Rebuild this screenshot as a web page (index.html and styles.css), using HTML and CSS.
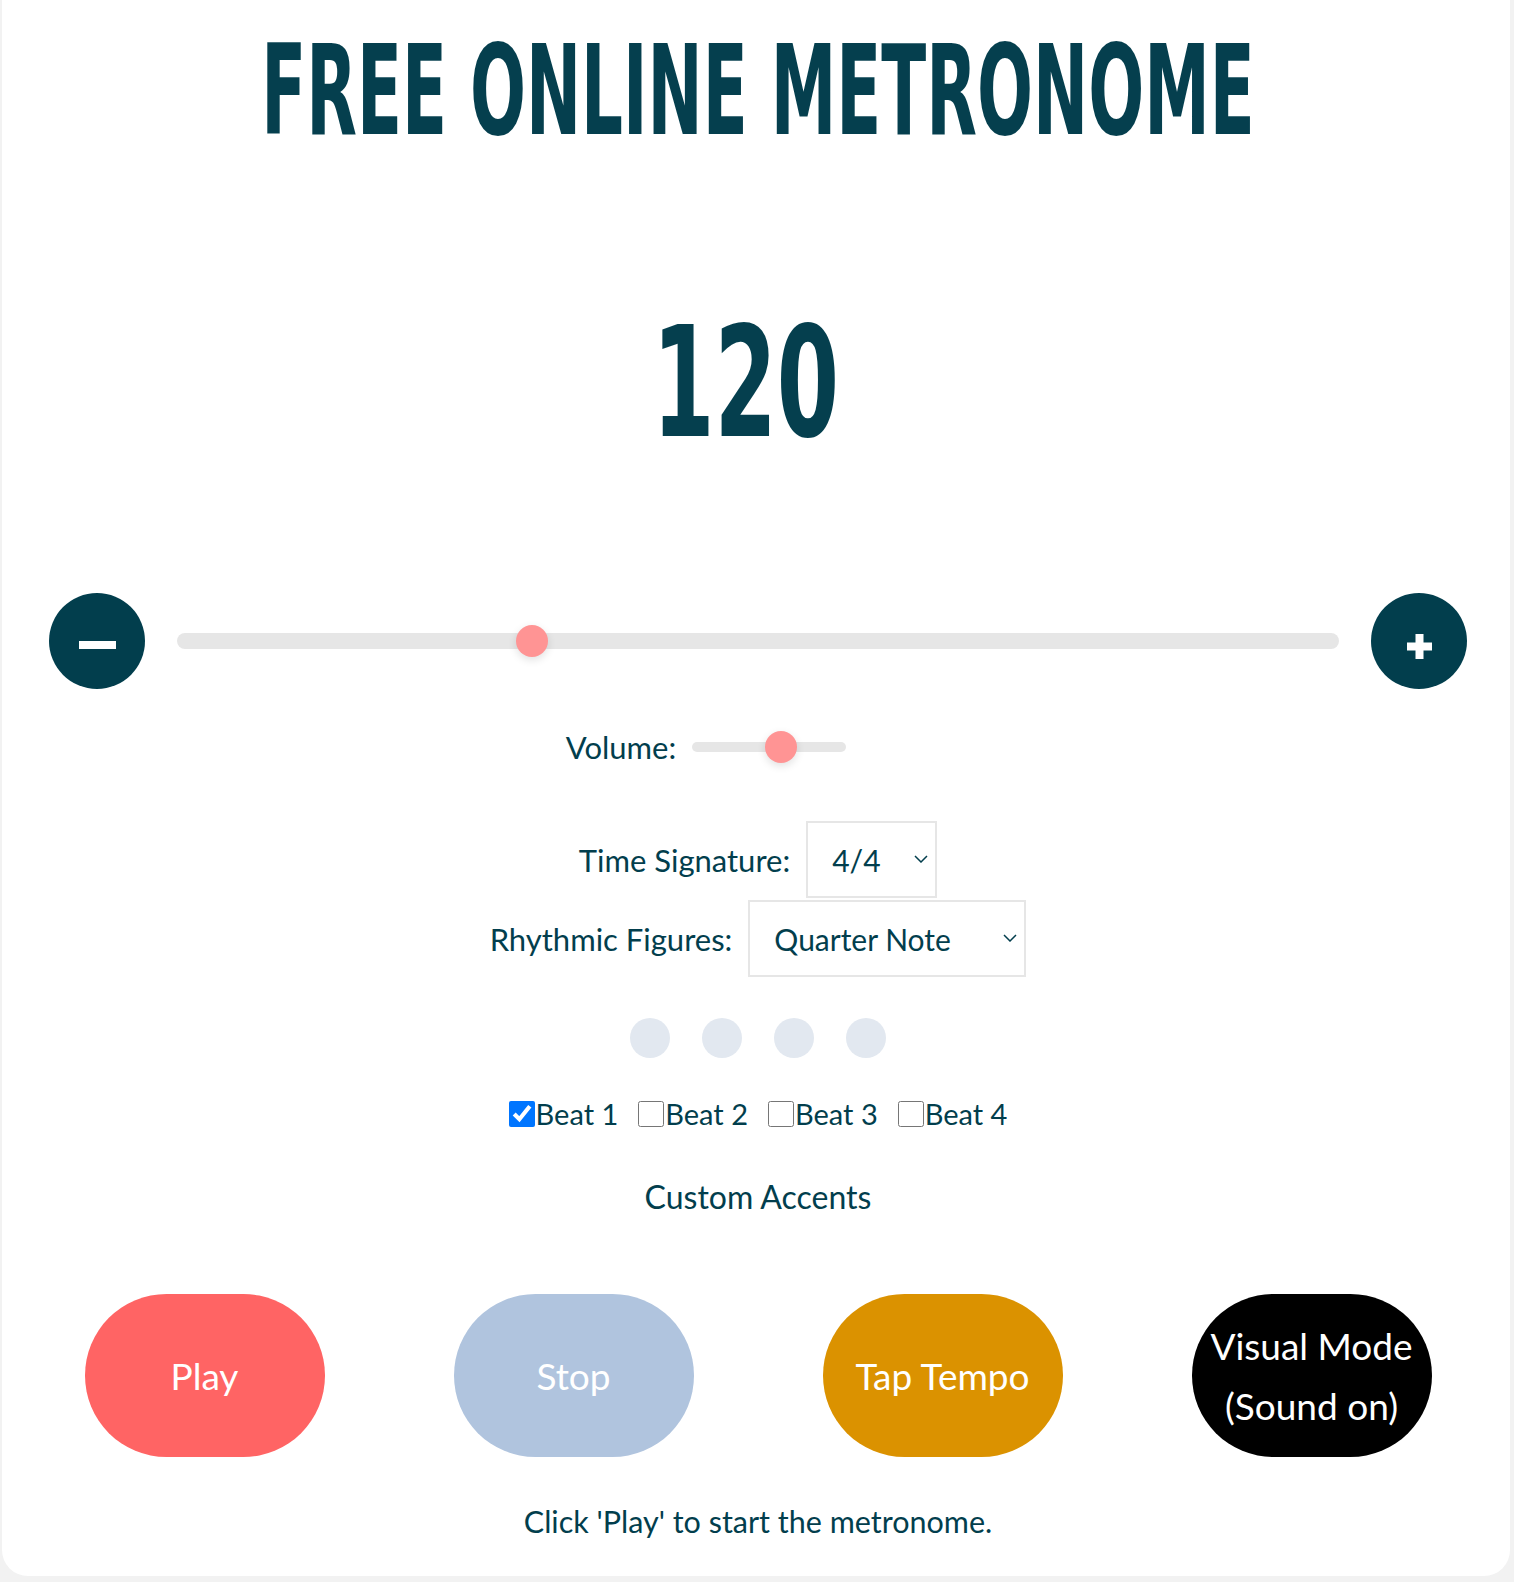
FILE: index.html
```html
<!DOCTYPE html>
<html lang="en">
<head>
<meta charset="utf-8">
<title>Free Online Metronome</title>
<link rel="stylesheet" href="styles.css">
</head>
<body>
<main class="card">
  <h1 class="title"><span class="title-text">FREE ONLINE METRONOME</span></h1>

  <div class="bpm"><span class="bpm-text">120</span></div>

  <div class="tempo-row">
    <button class="round-btn" aria-label="Decrease tempo">
      <svg class="icon-minus" width="37" height="8" viewBox="0 0 37 8"><rect x="0" y="0" width="37" height="8" fill="#fff"/></svg>
    </button>
    <input class="range tempo-range" type="range" min="30" max="330" value="120">
    <button class="round-btn" aria-label="Increase tempo">
      <svg class="icon-plus" width="25" height="25" viewBox="0 0 25 25"><rect x="8.5" y="0" width="8" height="25" fill="#fff"/><rect x="0" y="8.5" width="25" height="8" fill="#fff"/></svg>
    </button>
  </div>

  <div class="volume-row">
    <label class="label" for="vol">Volume:</label>
    <input id="vol" class="range volume-range" type="range" min="0" max="100" value="60">
  </div>

  <div class="select-row time-row">
    <label class="label" for="ts">Time Signature:</label>
    <div class="select-wrap select-time">
      <select id="ts" class="select"><option>4/4</option><option>3/4</option><option>2/4</option></select>
      <svg class="chevron" width="14" height="8" viewBox="0 0 14 8"><polyline points="1,1 7,7 13,1" fill="none" stroke="#023e4d" stroke-width="1.5"/></svg>
    </div>
  </div>

  <div class="select-row rhythm-row">
    <label class="label" for="rf">Rhythmic Figures:</label>
    <div class="select-wrap select-rhythm">
      <select id="rf" class="select"><option>Quarter Note</option><option>Eighth Note</option></select>
      <svg class="chevron" width="14" height="8" viewBox="0 0 14 8"><polyline points="1,1 7,7 13,1" fill="none" stroke="#023e4d" stroke-width="1.5"/></svg>
    </div>
  </div>

  <div class="dots">
    <span class="dot"></span><span class="dot"></span><span class="dot"></span><span class="dot"></span>
  </div>

  <div class="beats">
    <label class="beat"><input type="checkbox" checked>Beat 1</label>
    <label class="beat"><input type="checkbox">Beat 2</label>
    <label class="beat"><input type="checkbox">Beat 3</label>
    <label class="beat"><input type="checkbox">Beat 4</label>
  </div>

  <p class="custom">Custom Accents</p>

  <div class="buttons">
    <button class="pill pill-play">Play</button>
    <button class="pill pill-stop">Stop</button>
    <button class="pill pill-tap">Tap Tempo</button>
    <button class="pill pill-visual">Visual Mode<br>(Sound on)</button>
  </div>

  <p class="status">Click 'Play' to start the metronome.</p>
</main>
</body>
</html>
```

FILE: styles.css
```css
* { box-sizing: border-box; }

html, body {
  margin: 0;
  padding: 0;
}

body {
  background: #f2f2f2;
  font-family: "Lato", "Open Sans", sans-serif;
  color: #023e4d;
}

.card {
  margin: 0 4px 5px 2px;
  background: #ffffff;
  border-radius: 0 0 26px 26px;
  padding: 46px 0 35px 4px;
  display: flex;
  flex-direction: column;
  align-items: center;
}

.title {
  margin: 0;
  height: 125px;
  font-family: "DejaVu Sans Condensed", "DejaVu Sans", sans-serif;
  font-stretch: condensed;
  font-weight: 700;
  font-size: 73.25px;
  line-height: 125px;
  color: #053f4e;
  white-space: nowrap;
}

.title-text {
  display: block;
  height: 125px;
  transform-origin: 50% 87.8px;
  transform: scaleY(1.706);
}

.bpm {
  margin-top: 134px;
  height: 156px;
  padding-right: 24px;
  font-family: "DejaVu Sans Condensed", "DejaVu Sans", sans-serif;
  font-stretch: condensed;
  font-weight: 700;
  font-size: 153px;
  line-height: 156px;
  color: #053f4e;
}

.bpm-text {
  display: inline-block;
  transform: scaleX(0.65);
}

.tempo-row {
  margin-top: 132px;
  width: 1418px;
  display: flex;
  align-items: center;
  gap: 32px;
}

.round-btn {
  width: 96px;
  height: 96px;
  flex: none;
  border: none;
  border-radius: 50%;
  background: #023e4d;
  padding: 0;
  display: flex;
  align-items: center;
  justify-content: center;
}

.icon-minus { margin-top: 7px; }
.icon-plus { margin-top: 10px; }

.range {
  -webkit-appearance: none;
  appearance: none;
  background: transparent;
  margin: 0;
  height: 32px;
  padding: 0;
}

.range::-webkit-slider-thumb {
  -webkit-appearance: none;
  appearance: none;
  width: 32px;
  height: 32px;
  border-radius: 50%;
  background: #ff9494;
  border: none;
  box-shadow: 0 3px 8px rgba(0, 0, 0, 0.12);
}

.tempo-range { flex: 1; }

.tempo-range::-webkit-slider-runnable-track {
  height: 16px;
  border-radius: 8px;
  background: #e6e6e6;
}

.tempo-range::-webkit-slider-thumb { margin-top: -8px; }

.volume-row {
  margin-top: 42px;
  width: 100%;
  display: flex;
  justify-content: center;
  align-items: center;
  gap: 16px;
  padding-right: 104px;
  height: 32px;
}

.label {
  font-size: 31px;
  line-height: 40px;
  white-space: nowrap;
}

.volume-row .label { line-height: 32px; }

.volume-range { width: 154px; }

.volume-range::-webkit-slider-runnable-track {
  height: 10px;
  border-radius: 5px;
  background: #e6e6e6;
}

.volume-range::-webkit-slider-thumb { margin-top: -11px; }

.select-row {
  display: flex;
  align-items: center;
  gap: 16px;
}

.time-row { margin-top: 58px; }
.rhythm-row { margin-top: 2px; }

.select-wrap {
  position: relative;
  height: 77px;
}

.select {
  -webkit-appearance: none;
  appearance: none;
  height: 77px;
  width: 100%;
  border: 2px solid #e6e6e6;
  border-radius: 0;
  background: #ffffff;
  color: #023e4d;
  font-family: "Lato", "Open Sans", sans-serif;
  font-size: 30px;
  padding: 0 40px 0 24px;
  outline: none;
}

.select-time { width: 131px; }
.select-rhythm { width: 278px; }

.chevron {
  position: absolute;
  right: 9px;
  top: 34px;
  pointer-events: none;
}

.dots {
  margin-top: 41px;
  display: flex;
  gap: 32px;
}

.dot {
  width: 40px;
  height: 40px;
  border-radius: 50%;
  background: #e2e8f0;
}

.beats {
  margin-top: 36px;
  display: flex;
  gap: 20px;
  height: 40px;
  align-items: center;
}

.beat {
  display: flex;
  align-items: center;
  font-size: 29px;
  line-height: 40px;
  white-space: nowrap;
}

.beat input {
  width: 26px;
  height: 26px;
  margin: 0 1px 0 0;
}

.custom {
  margin: 43px 0 0;
  font-size: 32px;
  line-height: 40px;
}

.buttons {
  margin-top: 77px;
  display: flex;
  gap: 129px;
}

.pill {
  width: 240px;
  height: 163px;
  border: none;
  border-radius: 82px;
  color: #ffffff;
  font-family: "Lato", "Open Sans", sans-serif;
  font-size: 37px;
  line-height: 60px;
  padding: 0;
}

.pill-play { background: #ff6464; }
.pill-stop { background: #b0c4de; }
.pill-tap { background: #db9200; }
.pill-visual { background: #000000; }

.status {
  margin: 44px 0 0;
  font-size: 30.5px;
  line-height: 40px;
}
```
